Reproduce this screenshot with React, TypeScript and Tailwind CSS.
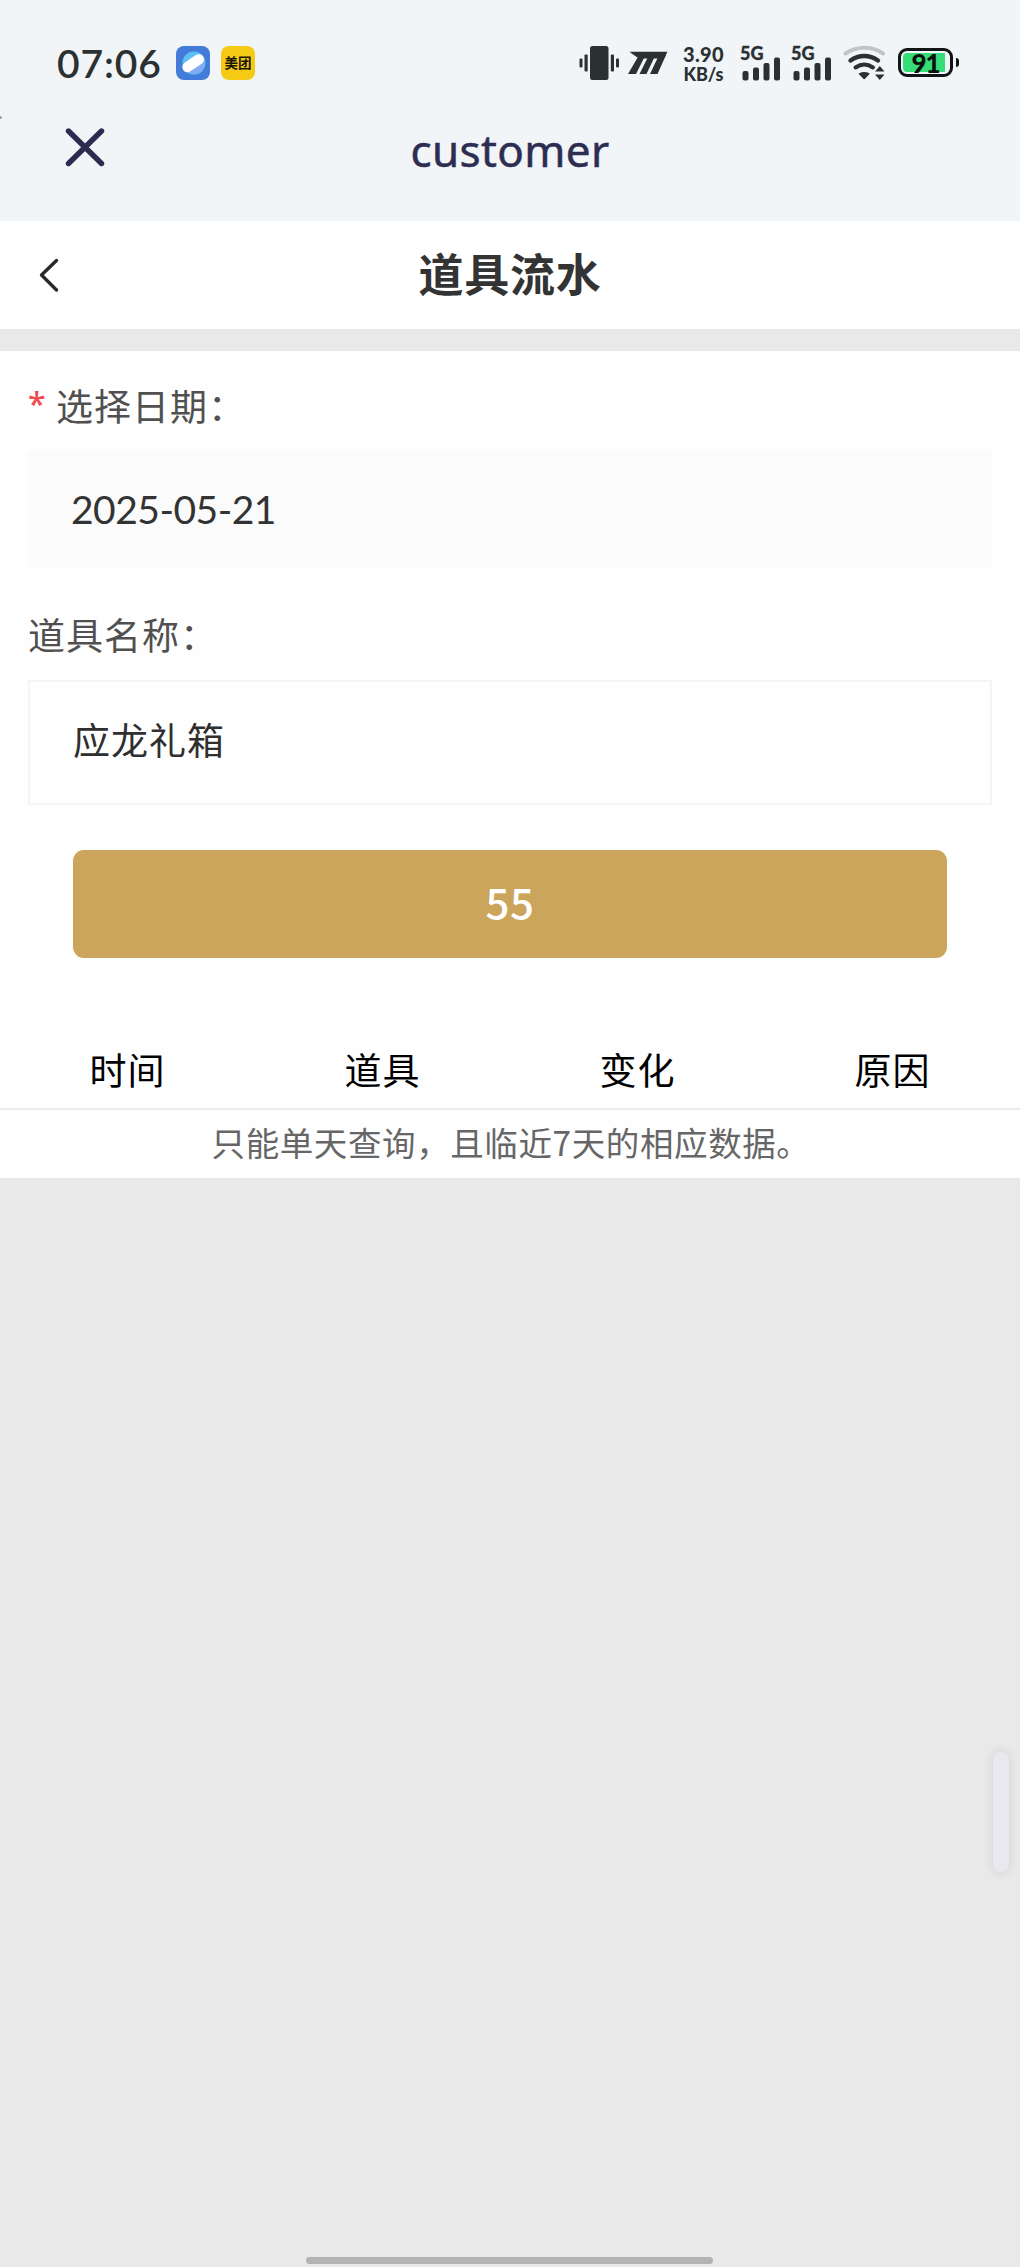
import React from "react";

const INK = "#2b3133";

function VibrateIcon() {
  return (
    <svg className="block h-[36px] w-[42px]" viewBox="0 0 42 36" fill={INK}>
      <rect x="0.5" y="13.5" width="3" height="9" rx="1" />
      <rect x="5.5" y="9.5" width="3.2" height="17" rx="1" />
      <rect x="11" y="1" width="18.5" height="34" rx="2.5" />
      <rect x="31.8" y="9.5" width="3.2" height="17" rx="1" />
      <rect x="37" y="13.5" width="3" height="9" rx="1" />
    </svg>
  );
}

function SpeedIcon() {
  return (
    <svg className="block h-[24px] w-[40px]" viewBox="0 0 40 24">
      <path d="M1.5 0.8H39.5L36 7.5H11Q6 4.5 1.5 0.8Z" fill={INK} />
      <path d="M10.500 5L17 5L8 23H0ZM20.500 5H27L18.500 23H11.500ZM31 4H38L29.500 23H22Z" fill={INK} />
    </svg>
  );
}

function Signal() {
  return (
    <div className="relative h-[36px] w-[42px]">
      <span className="absolute left-0 top-0 font-[Lato] text-[18px] font-black leading-[16px] [-webkit-text-stroke:0.3px_#2b3133]">5G</span>
      <svg className="absolute bottom-0 left-[2px] h-[24px] w-[39px]" viewBox="0 0 39 24" fill={INK}>
        <rect x="0.5" y="14" width="6" height="9.5" rx="2" />
        <rect x="11" y="10.5" width="6" height="13" rx="2" />
        <rect x="21.5" y="6" width="6" height="17.5" rx="2" />
        <rect x="32" y="0.5" width="6" height="23" rx="2" />
      </svg>
    </div>
  );
}

function WifiIcon() {
  return (
    <svg className="block h-[36px] w-[43px]" viewBox="0 0 43 36" fill="none" strokeLinecap="round">
      <path d="M2.5 8.5C14 0.8 29 0.8 40 8.5" stroke="#c2c5c7" strokeWidth="4" />
      <path d="M7.5 15.5C16 9.5 26.5 9.5 35 15.5" stroke={INK} strokeWidth="4.4" />
      <path d="M12.5 22.5C18 18.8 24.5 18.8 30 22.5" stroke={INK} strokeWidth="4" />
      <path d="M16.5 28.8Q21 26.5 25.8 28.8L21.2 33.5Z" fill={INK} stroke={INK} strokeWidth="1.5" strokeLinejoin="round" />
      <path d="M32 26.5L36.8 21L41.5 26.5ZM32 29.5L36.8 35L41.5 29.5Z" fill={INK} />
    </svg>
  );
}

function Battery() {
  return (
    <div className="flex items-center">
      <div className="relative h-[29px] w-[55px] rounded-[9px] border-[3px] border-[#111514] bg-[#f1f5f9] p-[2px]">
        <div className="h-full w-[42px] rounded-l-[4px] bg-[#36dc78]" />
        <span className="absolute inset-0 flex items-center justify-center font-[Lato] text-[26px] font-black leading-none tracking-[-1px] text-[#08110c]">91</span>
      </div>
      <div className="ml-[3px] h-[9px] w-[3px] rounded-r-full bg-[#111514]" />
    </div>
  );
}

function StatusBar() {
  return (
    <div className="flex h-[110px] items-start pl-[57px] pt-[45px] text-[#2b3133]">
      <div className="mt-[-1px] w-[119px] font-[Lato] text-[39px] font-semibold leading-[38px] tracking-[0.9px]">07:06</div>
      <svg className="mt-[1px] block h-[34px] w-[34px]" viewBox="0 0 34 34">
        <rect width="34" height="34" rx="8" fill="#437cd8" />
        <circle cx="18" cy="17" r="11.5" fill="#5dc0f4" />
        <path d="M8 22Q15 27 27 12Q31 21 24 26Q16 31 8 22Z" fill="#83aaf2" />
        <rect x="5" y="12" width="24" height="10.5" rx="5.25" transform="rotate(-34 17 17)" fill="#fff" />
      </svg>
      <div className="ml-[11px] mt-[1px] flex h-[34px] w-[34px] items-center justify-center rounded-[8px] bg-[#f5ca15] pb-px font-['Noto_Sans_CJK_SC',sans-serif] text-[13.5px] font-bold leading-none text-[#1b1708]">美团</div>
      <div className="ml-[324px]"><VibrateIcon /></div>
      <div className="ml-[7px] mt-[6px]"><SpeedIcon /></div>
      <div className="ml-[14px] w-[43px] text-center font-[Lato] font-black">
        <div className="text-[20px] leading-[19px] tracking-[0.4px]">3.90</div>
        <div className="text-[18px] leading-[20px]">KB/s</div>
      </div>
      <div className="ml-[15px]"><Signal /></div>
      <div className="ml-[9px]"><Signal /></div>
      <div className="ml-[10px]"><WifiIcon /></div>
      <div className="ml-[12px] mt-[3px]"><Battery /></div>
    </div>
  );
}

const columns = ["时间", "道具", "变化", "原因"];

export default function App() {
  return (
    <div className="relative flex h-[2267px] w-[1020px] flex-col overflow-hidden bg-[#e9e9e9] font-['Noto_Sans_CJK_SC',sans-serif]">
      <header className="h-[221px] bg-[#f1f5f8]">
        <StatusBar />
        <div className="relative flex h-[80px] items-center justify-center pb-[1px] font-['Noto_Sans',sans-serif] text-[44px] leading-none tracking-[0.4px] text-[#2d2d52] [-webkit-text-stroke:0.5px_#2d2d52]">
          <svg className="absolute left-[65px] top-[17px] h-[40px] w-[40px]" viewBox="0 0 40 40" stroke="#2d2b50" strokeWidth="5.4" strokeLinecap="round">
            <path d="M3.5 4L36.5 36.5M36.5 4L3.5 36.5" />
          </svg>
          <span className="absolute left-0 top-[6px] h-[3px] w-[2px] rounded-r-full bg-[#9da0a3]" />
          customer
        </div>
      </header>
      <nav className="relative flex h-[108px] items-center justify-center bg-white pb-[4px] text-[45px] font-bold tracking-[0.8px] text-[#333]">
        <svg className="absolute left-[38px] top-[36px] h-[36px] w-[24px]" viewBox="0 0 24 36" fill="none" stroke="#292929" strokeWidth="3.4" strokeLinecap="round" strokeLinejoin="round">
          <path d="M18.5 3.5L3.5 18L18.5 33" />
        </svg>
        道具流水
      </nav>
      <main className="mt-[22px] h-[827px] bg-[#fefefe]">
        <form className="px-[28px]">
          <label className="flex h-[100px] items-center pt-[9px] text-[37px] leading-none tracking-[1px] text-[#505050]">
            <span className="w-[28px] pb-[4px] font-['Noto_Sans',sans-serif] text-[32px] font-medium text-[#ee4b50]">*</span>
            选择日期：
          </label>
          <div className="flex h-[117px] items-center bg-[#fbfbfb] pl-[43px] font-[Lato] text-[39px] tracking-[-0.5px] text-[#333]">2025-05-21</div>
          <label className="flex h-[112px] items-center pt-[21px] text-[37px] leading-none tracking-[1px] text-[#505050]">道具名称：</label>
          <div className="flex h-[125px] items-center border-2 border-[#f5f5f5] pb-[6px] pl-[43px] text-[37px] tracking-[1px] text-[#2f2f2f]">应龙礼箱</div>
          <button type="button" className="mx-[45px] mt-[45px] flex h-[108px] w-[874px] items-center justify-center rounded-[11px] bg-[#cba55b] pb-[7px] text-[42px] font-medium tracking-[0.5px] text-white">55</button>
        </form>
        <div className="mt-[74px] grid h-[78px] grid-cols-4 items-center border-b-2 border-[#ebebeb] text-center text-[37px] tracking-[1px] text-black">
          {columns.map((name) => <div key={name}>{name}</div>)}
        </div>
        <p className="flex h-[67px] items-center justify-center pb-[2px] pl-[2px] text-[33.5px] tracking-[0.6px] text-[#666]">只能单天查询，且临近7天的相应数据。</p>
      </main>
      <div className="absolute left-[993px] top-[1752px] h-[120px] w-[16px] rounded-full bg-[#e9e8ef] shadow-[0_0_8px_3px_rgba(0,0,0,0.06)]" />
      <div className="absolute left-[306px] top-[2257px] h-[7px] w-[407px] rounded-full bg-[#b3b3b3]" />
    </div>
  );
}
